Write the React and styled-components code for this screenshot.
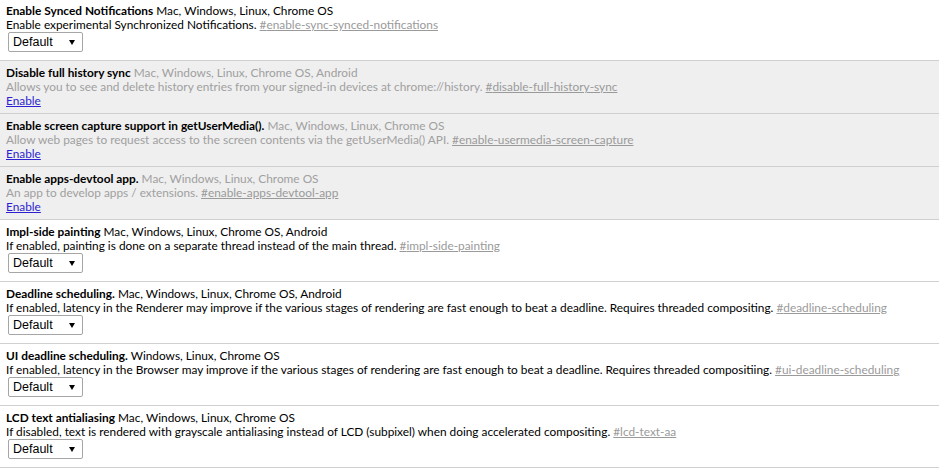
import React from "react";
import styled, { createGlobalStyle } from "styled-components";

const Global = createGlobalStyle`
  html, body { margin: 0; padding: 0; background: #fff; }
  body { font-family: Lato, "Liberation Sans", sans-serif; font-size: 11.85px; color: #000; }
`;

const List = styled.div`
  display: flex;
  flex-direction: column;
`;

const Row = styled.div`
  display: flex;
  flex-direction: column;
  align-items: flex-start;
  padding: ${(p) => (p.$first ? 4 : 5)}px 6px ${(p) => (p.$disabled ? 5 : 8)}px;
  border-bottom: 1px solid #d0d0d0;
  background: ${(p) => (p.$disabled ? "#efefef" : "#fff")};
  color: ${(p) => (p.$disabled ? "#a0a0a0" : "#000")};
  line-height: 14px;
`;

const Line = styled.div`
  white-space: nowrap;
  height: 14px;
`;

const Name = styled.span`
  font-weight: bold;
  color: #000;
`;

const Permalink = styled.a`
  color: #9a9a9a;
  text-decoration: underline;
`;

const EnableLink = styled.a`
  color: #2d1fd2;
  text-decoration: underline;
`;

const SelectWrap = styled.div`
  position: relative;
  margin-left: 2px;
  width: 75px;
  height: 20px;
`;

const Select = styled.select`
  appearance: none;
  -webkit-appearance: none;
  width: 75px;
  height: 20px;
  box-sizing: border-box;
  margin: 0;
  padding: 0 0 0 4px;
  border: 1px solid #a6a6a6;
  border-radius: 2px;
  background: #fff;
  font-family: "Liberation Sans", Arial, sans-serif;
  font-size: 12.5px;
  color: #000;
  outline: none;
`;

const Arrow = styled.span`
  position: absolute;
  right: 8px;
  top: 8px;
  width: 0;
  height: 0;
  border-left: 3px solid transparent;
  border-right: 3px solid transparent;
  border-top: 5px solid #000;
  pointer-events: none;
`;

const flags = [
  {
    name: "Enable Synced Notifications",
    platforms: "Mac, Windows, Linux, Chrome OS",
    desc: "Enable experimental Synchronized Notifications.",
    id: "enable-sync-synced-notifications",
  },
  {
    name: "Disable full history sync",
    platforms: "Mac, Windows, Linux, Chrome OS, Android",
    desc: "Allows you to see and delete history entries from your signed-in devices at chrome://history.",
    id: "disable-full-history-sync",
    disabled: true,
  },
  {
    name: "Enable screen capture support in getUserMedia().",
    platforms: "Mac, Windows, Linux, Chrome OS",
    desc: "Allow web pages to request access to the screen contents via the getUserMedia() API.",
    id: "enable-usermedia-screen-capture",
    disabled: true,
  },
  {
    name: "Enable apps-devtool app.",
    platforms: "Mac, Windows, Linux, Chrome OS",
    desc: "An app to develop apps / extensions.",
    id: "enable-apps-devtool-app",
    disabled: true,
  },
  {
    name: "Impl-side painting",
    platforms: "Mac, Windows, Linux, Chrome OS, Android",
    desc: "If enabled, painting is done on a separate thread instead of the main thread.",
    id: "impl-side-painting",
  },
  {
    name: "Deadline scheduling.",
    platforms: "Mac, Windows, Linux, Chrome OS, Android",
    desc: "If enabled, latency in the Renderer may improve if the various stages of rendering are fast enough to beat a deadline. Requires threaded compositing.",
    id: "deadline-scheduling",
  },
  {
    name: "UI deadline scheduling.",
    platforms: "Windows, Linux, Chrome OS",
    desc: "If enabled, latency in the Browser may improve if the various stages of rendering are fast enough to beat a deadline. Requires threaded compositiing.",
    id: "ui-deadline-scheduling",
  },
  {
    name: "LCD text antialiasing",
    platforms: "Mac, Windows, Linux, Chrome OS",
    desc: "If disabled, text is rendered with grayscale antialiasing instead of LCD (subpixel) when doing accelerated compositing.",
    id: "lcd-text-aa",
  },
];

export default function App() {
  return (
    <>
      <Global />
      <List>
        {flags.map((f, i) => (
          <Row key={f.id} $first={i === 0} $disabled={f.disabled}>
            <Line>
              <Name>{f.name}</Name> {f.platforms}
            </Line>
            <Line>
              {f.desc} <Permalink href={"#" + f.id}>#{f.id}</Permalink>
            </Line>
            {f.disabled ? (
              <Line>
                <EnableLink href="#">Enable</EnableLink>
              </Line>
            ) : (
              <SelectWrap>
                <Select defaultValue="default">
                  <option value="default">Default</option>
                  <option value="enabled">Enabled</option>
                  <option value="disabled">Disabled</option>
                </Select>
                <Arrow />
              </SelectWrap>
            )}
          </Row>
        ))}
      </List>
    </>
  );
}
